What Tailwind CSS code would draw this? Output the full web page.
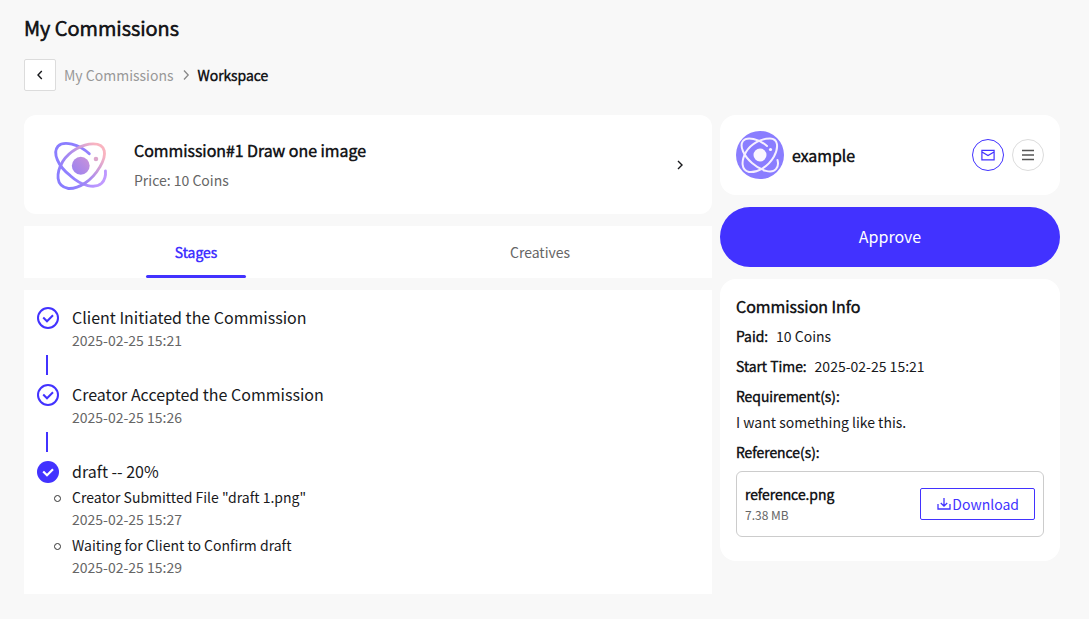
<!DOCTYPE html>
<html lang="en">
<head>
<meta charset="utf-8">
<meta name="viewport" content="width=device-width, initial-scale=1">
<title>My Commissions</title>
<script src="https://cdn.jsdelivr.net/npm/@tailwindcss/browser@4"></script>
</head>
<body class="min-h-screen bg-[#f8f8f8] font-['Noto_Sans_CJK_SC',sans-serif] text-sm leading-[22px] text-[#18191c]">
<main class="pt-[14px] pr-[29px] pb-6 pl-6">
  <h1 class="font-['Noto_Sans_CJK_SC_DemiLight','Noto_Sans_CJK_SC',sans-serif] text-xl leading-7 font-bold">My Commissions</h1>
  <nav aria-label="Breadcrumb" class="mt-[17px] flex items-center">
    <button type="button" aria-label="Back" class="flex size-8 items-center justify-center rounded-xs border border-[#dcdcdc] bg-white">
      <svg class="size-4" viewBox="0 0 16 16" fill="none" stroke="currentColor" stroke-width="1.4"><path d="M9.8 4 6 8l3.8 4"/></svg>
    </button>
    <a href="#" class="ml-2 text-[#999]">My Commissions</a>
    <svg class="mx-1 size-4" viewBox="0 0 16 16" fill="none" stroke="#888" stroke-width="1.3"><path d="m6 3.500 4.200 4.500L6 12.500"/></svg>
    <span aria-current="page" class="font-['Noto_Sans_CJK_SC_DemiLight','Noto_Sans_CJK_SC',sans-serif] font-bold">Workspace</span>
  </nav>

  <div class="mt-6 flex items-start gap-2">
    <div class="flex min-w-0 flex-1 flex-col gap-3">
      <a href="#" class="flex items-center rounded-xl bg-white pt-4 pr-6 pb-[17px] pl-6">
        <svg class="my-[1px] size-16" viewBox="-1.500 -3 67.400 67.400" fill="none">
          <defs><linearGradient id="logo" x1="12" y1="44" x2="50" y2="12" gradientUnits="userSpaceOnUse"><stop stop-color="#8a7dff"/><stop offset=".45" stop-color="#a98af0"/><stop offset="1" stop-color="#f9b4c0"/></linearGradient>
          <linearGradient id="orbit" x1="8" y1="20" x2="58" y2="50" gradientUnits="userSpaceOnUse"><stop stop-color="#8a7dff"/><stop offset=".5" stop-color="#9381ff"/><stop offset="1" stop-color="#c49bff"/></linearGradient>
          <linearGradient id="core" x1="26" y1="38" x2="40" y2="26" gradientUnits="userSpaceOnUse"><stop stop-color="#a084ee"/><stop offset="1" stop-color="#c490dc"/></linearGradient></defs>
          <path d="M42 20C31 9.500 15 6 9 12C3 19 9 33 22 43C34 54 48 57 55 51C59 47 59.500 43 59 38" stroke="url(#orbit)" stroke-width="3" stroke-linecap="round"/>
          <path d="M46 9.500C60 9.500 61 21 53 34C45 48 31 57 20 56.500C6 54 7 40 14 28C21 17 35 9.500 46 9.500Z" stroke="url(#logo)" stroke-width="3"/>
          <circle cx="33" cy="32.500" r="9.400" fill="url(#core)"/>
          <circle cx="49" cy="25.500" r="2.400" fill="#dca6cb"/>
        </svg>
        <div class="ml-[22px] flex-1">
          <div class="font-['Noto_Sans_CJK_SC_DemiLight','Noto_Sans_CJK_SC',sans-serif] text-base leading-6 font-bold">Commission#1 Draw one image</div>
          <div class="mt-2 leading-5 text-[#666]">Price: 10 Coins</div>
        </div>
        <svg class="mt-px size-4" viewBox="0 0 16 16" fill="none" stroke="currentColor" stroke-width="1.4"><path d="m6 4 4 4-4 4"/></svg>
      </a>

      <div role="tablist" class="grid h-[52px] grid-cols-2 bg-white">
        <button type="button" role="tab" aria-selected="true" class="relative mx-auto w-[100px] font-['Noto_Sans_CJK_SC_DemiLight','Noto_Sans_CJK_SC',sans-serif] font-bold text-[#4232ff]">Stages<span class="absolute inset-x-0 bottom-0 h-[3px] rounded-xs bg-[#4232ff]"></span></button>
        <button type="button" role="tab" aria-selected="false" class="mx-auto w-[100px] text-[#666]">Creatives</button>
      </div>

      <section class="bg-white px-3 pt-4 pb-4">
        <div class="flex gap-3">
          <svg class="size-6 shrink-0" viewBox="0 0 24 24" fill="none" stroke="#4232ff" stroke-width="2"><circle cx="12" cy="12" r="10"/><path d="m7.2 11.5 3.8 3.8 6-6"/></svg>
          <div><h2 class="text-base leading-[22px]">Client Initiated the Commission</h2><p class="mt-px text-[#666]">2025-02-25 15:21</p></div>
        </div>
        <div class="mt-1 mb-2 ml-[10px] h-5 w-0.5 bg-[#4232ff]"></div>
        <div class="flex gap-3">
          <svg class="size-6 shrink-0" viewBox="0 0 24 24" fill="none" stroke="#4232ff" stroke-width="2"><circle cx="12" cy="12" r="10"/><path d="m7.2 11.5 3.8 3.8 6-6"/></svg>
          <div><h2 class="text-base leading-[22px]">Creator Accepted the Commission</h2><p class="mt-px text-[#666]">2025-02-25 15:26</p></div>
        </div>
        <div class="mt-1 mb-2 ml-[10px] h-5 w-0.5 bg-[#4232ff]"></div>
        <div class="flex gap-3">
          <svg class="size-6 shrink-0" viewBox="0 0 24 24" fill="none"><circle cx="12" cy="12" r="11" fill="#4232ff"/><path d="m7.2 11.5 3.8 3.8 6-6" stroke="#fff" stroke-width="2.2"/></svg>
          <h2 class="text-base leading-[22px]">draft -- 20%</h2>
        </div>
        <ul class="mt-0.5 flex flex-col gap-1">
          <li class="flex gap-[11px]"><span class="mt-[9px] ml-[18px] size-[7px] shrink-0 rounded-full border border-[#333]"></span><div><p>Creator Submitted File "draft 1.png"</p><p class="text-[#666]">2025-02-25 15:27</p></div></li>
          <li class="flex gap-[11px]"><span class="mt-[9px] ml-[18px] size-[7px] shrink-0 rounded-full border border-[#333]"></span><div><p>Waiting for Client to Confirm draft</p><p class="text-[#666]">2025-02-25 15:29</p></div></li>
        </ul>
      </section>
    </div>

    <aside class="flex w-[340px] shrink-0 flex-col gap-3">
      <div class="flex items-center rounded-2xl bg-white p-4">
        <svg class="size-12" viewBox="0 0 48 48" fill="none">
          <circle cx="24" cy="24" r="24" fill="#8a7dff"/>
          <g stroke="#f6f0ff" stroke-width="2" stroke-linecap="round"><path d="M31 15C23 8 11 5 7 10C3 15 8 25 16 32C25 40 36 43 40 38C43 35 42 31 41.500 29"/><path d="M34 7.500C42 7.500 43 16 38 25.500C32 36 21 42 13 41C5 39 5 30 10 21C15 12.500 25 7.500 34 7.500Z"/></g>
          <circle cx="24" cy="24" r="6.500" fill="#faf6ff"/><circle cx="34.500" cy="18.500" r="1.600" fill="#faf6ff"/>
        </svg>
        <div class="ml-2 flex-1 font-['Noto_Sans_CJK_SC_DemiLight','Noto_Sans_CJK_SC',sans-serif] text-base leading-6 font-bold">example</div>
        <button type="button" aria-label="Message" class="flex size-8 items-center justify-center rounded-full border border-[#4232ff] text-[#4232ff]">
          <svg class="size-4" viewBox="0 0 16 16" fill="none" stroke="currentColor" stroke-width="1.2"><path d="M1.900 3.400h12.200v9.400H1.900zM2 5l6 3.600L14 5"/></svg>
        </button>
        <button type="button" aria-label="Menu" class="ml-2 flex size-8 items-center justify-center rounded-full border border-[#dcdcdc] text-[#555]">
          <svg class="size-4" viewBox="0 0 16 16" fill="none" stroke="currentColor" stroke-width="1.500"><path d="M2 3.500h12M2 8h12M2 12.500h12"/></svg>
        </button>
      </div>
      <button type="button" class="h-[60px] rounded-full bg-[#4232ff] pb-0.5 text-base text-white">Approve</button>
      <section class="rounded-2xl bg-white px-4 pt-4 pb-6">
        <h2 class="font-['Noto_Sans_CJK_SC_DemiLight','Noto_Sans_CJK_SC',sans-serif] text-base leading-[22px] font-bold">Commission Info</h2>
        <dl>
          <div class="mt-2 flex gap-2"><dt class="font-['Noto_Sans_CJK_SC_DemiLight','Noto_Sans_CJK_SC',sans-serif] font-bold">Paid:</dt><dd>10 Coins</dd></div>
          <div class="mt-2 flex gap-2"><dt class="font-['Noto_Sans_CJK_SC_DemiLight','Noto_Sans_CJK_SC',sans-serif] font-bold">Start Time:</dt><dd>2025-02-25 15:21</dd></div>
          <dt class="mt-2 font-['Noto_Sans_CJK_SC_DemiLight','Noto_Sans_CJK_SC',sans-serif] font-bold">Requirement(s):</dt><dd class="mt-1">I want something like this.</dd>
          <dt class="mt-2 font-['Noto_Sans_CJK_SC_DemiLight','Noto_Sans_CJK_SC',sans-serif] font-bold">Reference(s):</dt>
          <dd class="mt-2 flex items-center justify-between rounded-md border border-[#ccc] px-2 py-[11px]">
            <div><p class="font-['Noto_Sans_CJK_SC_DemiLight','Noto_Sans_CJK_SC',sans-serif] font-bold">reference.png</p><p class="text-xs leading-5 text-[#666]">7.38 MB</p></div>
            <button type="button" class="flex h-8 items-center rounded-xs border border-[#4232ff] px-[15px] text-[#4232ff]">
              <svg class="size-4" viewBox="0 0 16 16" fill="none" stroke="currentColor" stroke-width="1.300"><path d="M2 8v5h12V8M8 2v8M4.800 7 8 10.200 11.200 7"/></svg>Download</button>
          </dd>
        </dl>
      </section>
    </aside>
  </div>
</main>
</body>
</html>
